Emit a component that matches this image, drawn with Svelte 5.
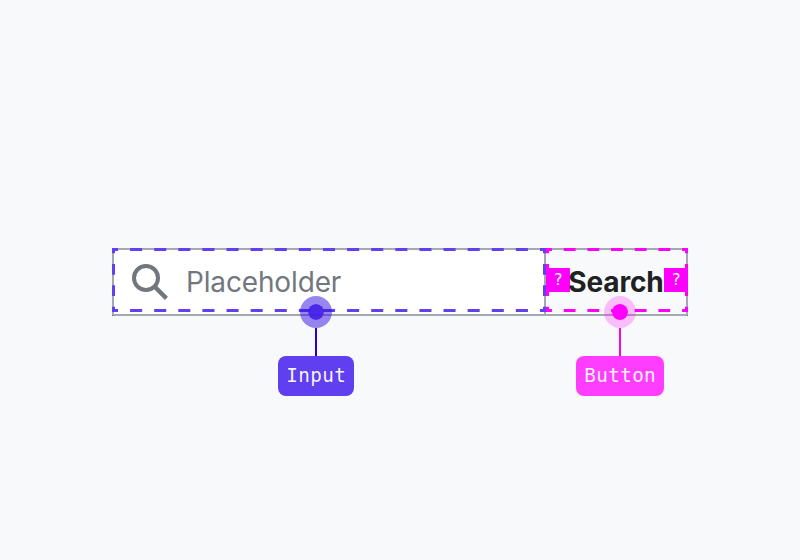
<script>
  const frames = [
    { x: 112, w: 434, n: 18, color: '#6040f0' },
    { x: 546, w: 142, n: 6, color: '#ff00ff' }
  ];
  const dash = (len, n) => {
    const d = len / n / 2;
    return { strokeDasharray: `${d} ${d}`, offset: d / 2 };
  };
  const sides = (f) => {
    const h = dash(f.w, f.n);
    const v = dash(64, 3);
    return [
      { x1: 0, x2: f.w, y1: 1.5, y2: 1.5, ...h },
      { x1: 0, x2: f.w, y1: 62.5, y2: 62.5, ...h },
      { x1: 1.5, x2: 1.5, y1: 0, y2: 64, ...v },
      { x1: f.w - 1.5, x2: f.w - 1.5, y1: 0, y2: 64, ...v }
    ];
  };
</script>

<main>
  <div class="search">
    <div class="input">
      <svg class="icon" width="36" height="36" viewBox="0 0 36 36" fill="none" stroke="#72777d" stroke-width="4">
        <circle cx="14" cy="14" r="12" />
        <path stroke-width="4.4" d="M22 22 34.4 34.4" />
      </svg>
      <span class="placeholder">Placeholder</span>
    </div>
    <div class="button">
      <span class="unknown">?</span>
      <span class="search-label">Search</span>
      <span class="unknown">?</span>
    </div>
    {#each frames as f}
      <svg class="frame" style:left="{f.x - 112}px" width={f.w} height="64" stroke={f.color} stroke-width="3">
        {#each sides(f) as s}
          <line x1={s.x1} x2={s.x2} y1={s.y1} y2={s.y2} stroke-dasharray={s.strokeDasharray} stroke-dashoffset={s.offset} />
        {/each}
      </svg>
    {/each}
    <div class="callout violet">
      <span class="dot"></span><span class="stem"></span><span class="tag">Input</span>
    </div>
    <div class="callout pink">
      <span class="dot"></span><span class="stem"></span><span class="tag">Button</span>
    </div>
  </div>
</main>

<style>
  :global(body) { margin: 0; }
  main {
    width: 800px;
    height: 560px;
    box-sizing: border-box;
    padding: 248px 112px 0;
    background: #f8f9fb;
    font-family: Inter, sans-serif;
    overflow: hidden;
  }
  .search {
    position: relative;
    display: flex;
    box-sizing: border-box;
    width: 576px;
    height: 68px;
    border: 2px solid #a2a9b1;
  }
  .search::before,
  .search::after {
    content: "";
    position: absolute;
    bottom: -2px;
    width: 1px;
    height: 1px;
    background: #3f74d0;
  }
  .search::before { left: -2px; }
  .search::after { right: -2px; }
  .input {
    display: flex;
    align-items: center;
    box-sizing: border-box;
    width: 432px;
    padding-left: 18px;
    gap: 18px;
    background: #fff;
    border-right: 2px solid #a2a9b1;
  }
  .icon { flex: none; overflow: visible; }
  .placeholder {
    font-size: 28px;
    line-height: 34px;
    letter-spacing: -0.15px;
    color: #72777d;
  }
  .button {
    display: flex;
    flex: 1;
    align-items: center;
    justify-content: space-between;
    background: #f8f9fa;
  }
  .unknown {
    width: 24px;
    height: 24px;
    margin-top: -4px;
    background: #f0f;
    color: #fff;
    font: 16px/24px "DejaVu Sans Mono", monospace;
    text-align: center;
  }
  .unknown:last-child { margin-right: -2px; }
  .search-label {
    width: 94px;
    display: flex;
    justify-content: center;
    margin-left: -2px;
    font-size: 28px;
    line-height: 34px;
    letter-spacing: -0.15px;
    font-weight: 700;
    color: #202122;
    white-space: nowrap;
  }
  .frame { position: absolute; top: -2px; margin-left: -2px; }
  .callout {
    position: absolute;
    top: 46px;
    display: flex;
    flex-direction: column;
    align-items: center;
    transform: translateX(-50%);
  }
  .violet { left: 202px; }
  .pink { left: 506px; }
  .dot {
    width: 16px;
    height: 16px;
    border-radius: 50%;
    border: 8px solid;
    background-clip: padding-box;
  }
  .stem { width: 2px; height: 28px; }
  .tag {
    box-sizing: border-box;
    height: 40px;
    padding-left: 0.4px;
    border-radius: 8px;
    color: rgba(255, 255, 255, .95);
    font: 19.3px/40px "DejaVu Sans Mono", monospace;
    letter-spacing: 0.36px;
    text-align: center;
  }
  .violet .dot { background-color: rgba(66, 28, 232, .95); border-color: rgba(49, 14, 226, .5); }
  .violet .stem { background: #2a00d0; }
  .violet .tag { width: 76px; background: #5f3ff0; }
  .pink .dot { background-color: #f0f; border-color: rgba(255, 0, 255, .24); }
  .pink .stem { background: #f508e6; }
  .pink .tag { width: 88px; background: #ff3dff; }
</style>
